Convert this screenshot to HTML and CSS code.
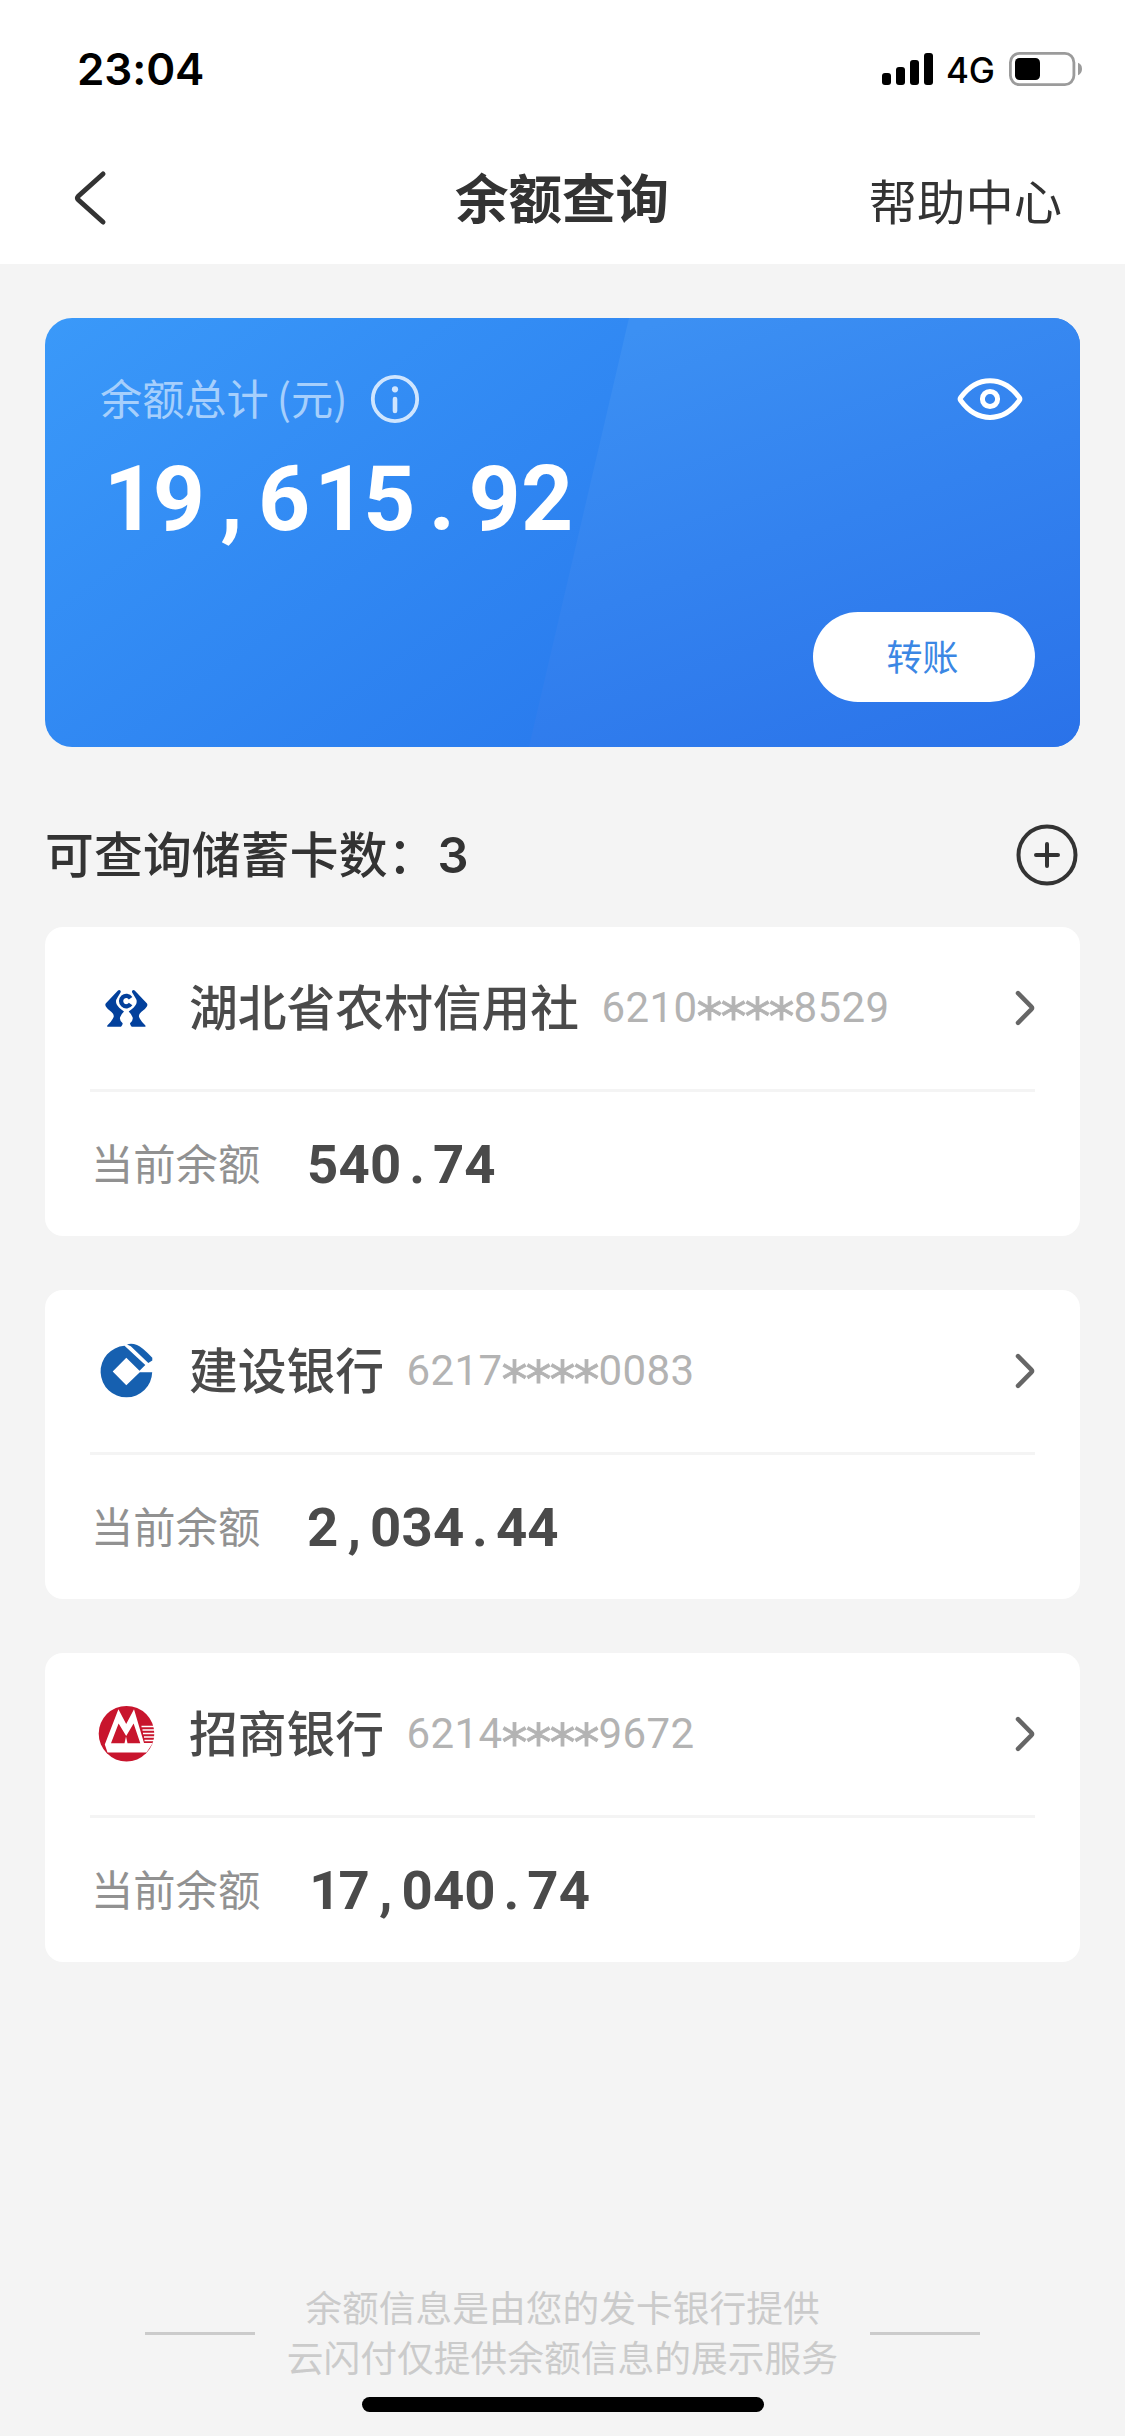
FILE: index.html
```html
<!DOCTYPE html>
<html lang="zh-CN">
<head>
<meta charset="utf-8">
<title>余额查询</title>
<link rel="stylesheet" href="styles.css">
</head>
<body>
<div class="screen">
  <header class="top">
    <div class="status">
      <span class="time">23:04</span>
      <div class="status-right">
        <svg class="signal" width="51" height="34" viewBox="0 0 51 34"><rect x="0" y="21" width="9" height="12" rx="3"/><rect x="14" y="15" width="9" height="18" rx="3"/><rect x="28" y="8" width="9" height="25" rx="3"/><rect x="42" y="1" width="9" height="32" rx="3"/></svg>
        <span class="network">4G</span>
        <svg class="battery" width="74" height="34" viewBox="0 0 74 34"><rect x="1.4" y="1.4" width="63.5" height="31.2" rx="9" fill="none" stroke="#9b9b9b" stroke-width="2.8"/><rect x="6" y="6" width="25" height="22" rx="4.5"/><path d="M69 10.8c2.600 1 4 3.200 4 6.200s-1.400 5.200-4 6.200z" fill="#9b9b9b"/></svg>
      </div>
    </div>
    <nav class="nav">
      <svg class="back" width="36" height="56" viewBox="0 0 36 56"><path d="M31 4 6.500 26q-2 2 0 4L31 52" fill="none" stroke="#333" stroke-width="5" stroke-linecap="round"/></svg>
      <h1 class="title">余额查询</h1>
      <a class="help">帮助中心</a>
    </nav>
  </header>

  <main class="main">
    <section class="summary">
      <div class="summary-head">
        <span class="label">余额总计<span class="unit">(元)</span></span>
        <svg class="info" width="50" height="50" viewBox="0 0 50 50"><circle cx="25" cy="25" r="22.200" fill="none" stroke="#cfe5fe" stroke-width="3.800"/><circle cx="25" cy="15.300" r="3.100" fill="#cfe5fe"/><path d="M25 25v12" stroke="#cfe5fe" stroke-width="4.600" stroke-linecap="round"/></svg>
        <svg class="eye" width="66" height="44" viewBox="0 0 66 44"><path d="M3.700 20.500C20-2 46-2 62.300 20.500q1.100 1.500 0 3C46 46 20 46 3.700 23.500q-1.100-1.500 0-3z" fill="none" stroke="#fff" stroke-width="5" stroke-linejoin="round"/><circle cx="33" cy="22" r="7.600" fill="none" stroke="#fff" stroke-width="5"/></svg>
      </div>
      <div class="total"><i class="one">1</i>9<i class="cell">,</i>6<i class="one">1</i>5<i class="cell">.</i>92</div>
      <button class="transfer">转账</button>
    </section>

    <div class="section-head">
      <h2 class="section-title">可查询储蓄卡数：<b class="count">3</b></h2>
      <svg width="62" height="62" viewBox="0 0 62 62"><g fill="none" stroke="#333" stroke-width="4"><circle cx="31" cy="31" r="28.500"/><path d="M20 31h22M31 20v22" stroke-linecap="round"/></g></svg>
    </div>

    <section class="card">
      <div class="bank">
        <svg class="logo" width="60" height="60" viewBox="0 0 60 60"><defs><path id="hand" d="M24.300 12.600q-1.100-1.200-2.300 0L9.700 25.500q-.9 1.500.3 3.300 1.500 2.700 5.500 5.200 3.800 3 1.300 6.800-2 3.700-5.300 6.500-.9 1.400.5 1.400H25q1.700-1.700 1.700-3.400-3.500-2.800-2.600-6 .8-3 3.900-5.900-5.800-3.700-7.500-7.400-1.300-3.500 1-6.600l3-5q.6-.9-.2-1.800z"/></defs><g fill="#02409c"><use href="#hand"/><use href="#hand" transform="translate(60.700 0) scale(-1 1)"/></g><path d="M34.600 20.200A5.200 5.200 0 1 0 34.600 26" fill="none" stroke="#02409c" stroke-width="4.300"/></svg>
        <span class="name">湖北省农村信用社</span>
        <span class="mask">6210<i>*</i><i>*</i><i>*</i><i>*</i>8529</span>
        <svg class="chevron" width="24" height="40" viewBox="0 0 24 40"><path d="M5 5.200 18.300 18.600q1.400 1.400 0 2.800L5 34.800" fill="none" stroke="#666" stroke-width="4.500" stroke-linecap="round"/></svg>
      </div>
      <div class="balance"><span class="balance-label">当前余额</span><span class="amount">540<i class="cell">.</i>74</span></div>
    </section>

    <section class="card">
      <div class="bank">
        <svg class="logo" width="60" height="60" viewBox="0 0 60 60"><path d="M28.500 4.800A25.800 25.800 0 1 0 56.200 31.300H43.800L30.300 44.300 16.700 30.500 30.300 16.800 43.500 29.800 49.300 24z" fill="#1660b0"/><path d="M31 3.600q4-1.700 10 .4 5 1.800 15.300 12.800v2.600L52.300 22 34.800 5.200z" fill="#1660b0"/></svg>
        <span class="name">建设银行</span>
        <span class="mask">6217<i>*</i><i>*</i><i>*</i><i>*</i>0083</span>
        <svg class="chevron" width="24" height="40" viewBox="0 0 24 40"><path d="M5 5.200 18.300 18.600q1.400 1.400 0 2.800L5 34.800" fill="none" stroke="#666" stroke-width="4.500" stroke-linecap="round"/></svg>
      </div>
      <div class="balance"><span class="balance-label">当前余额</span><span class="amount">2<i class="cell">,</i>034<i class="cell">.</i>44</span></div>
    </section>

    <section class="card">
      <div class="bank">
        <svg class="logo" width="60" height="60" viewBox="0 0 60 60"><circle cx="30.500" cy="29.700" r="27.800" fill="#c8152d"/><path d="M22.400 5.300 8.800 40.500 11.500 48.500H50.500L56.800 39H48L38 5.300 30.200 20z" fill="#fff"/><path d="M22.600 19.500 15 39.300H28.500L30 32.500 31.500 39.300H44.300L37.600 19.500 30.200 32z" fill="#c8152d"/><path d="M45.500 22.500H59M46.500 26H59M47 29.500H59M48 33H59M48.500 36.500H58" stroke="#fff" stroke-width="1.500"/></svg>
        <span class="name">招商银行</span>
        <span class="mask">6214<i>*</i><i>*</i><i>*</i><i>*</i>9672</span>
        <svg class="chevron" width="24" height="40" viewBox="0 0 24 40"><path d="M5 5.200 18.300 18.600q1.400 1.400 0 2.800L5 34.800" fill="none" stroke="#666" stroke-width="4.500" stroke-linecap="round"/></svg>
      </div>
      <div class="balance"><span class="balance-label">当前余额</span><span class="amount"><i class="one">1</i>7<i class="cell">,</i>040<i class="cell">.</i>74</span></div>
    </section>
  </main>

  <footer class="footer">
    <div class="notice"><span class="rule"></span><p>余额信息是由您的发卡银行提供<br>云闪付仅提供余额信息的展示服务</p><span class="rule"></span></div>
    <div class="home-bar"></div>
  </footer>
</div>
</body>
</html>
```
FILE: styles.css
```css
* { box-sizing: border-box; }
body { margin: 0; font-family: "Noto Sans CJK SC", sans-serif; color: #333; background: #f4f4f4; }
h1, h2, p { margin: 0; font-weight: 500; }
i { font-style: normal; }
svg { display: block; flex: none; }
.screen { width: 1125px; height: 2436px; display: flex; flex-direction: column; }

.top { height: 264px; background: #fff; }
.status { height: 132px; padding: 3px 42px 0 77px; display: flex; align-items: center; justify-content: space-between; font-family: Inter, sans-serif; color: #000; }
.time { font-size: 44px; font-weight: 600; line-height: 54px; letter-spacing: -0.1px; padding-top: 2px; }
.status-right { display: flex; align-items: center; padding-top: 3px; }
.network { width: 63px; margin: 0 0 0 13px; font-size: 35px; font-weight: 500; letter-spacing: -0.3px; line-height: 40px; padding-top: 1px; }
.nav { height: 132px; padding: 0 63px 0 72px; display: grid; grid-template-columns: 1fr auto 1fr; align-items: center; }
.title { font-size: 53.5px; font-weight: 700; line-height: 80px; padding: 0 10px 4px 0; }
.help { justify-self: end; font-size: 48.3px; line-height: 72px; padding-top: 2px; }

.main { padding: 54px 45px 0; }
.summary { position: relative; height: 429px; padding: 54px 45px 45px 55px; border-radius: 27px; overflow: hidden; background: linear-gradient(144deg, #3a99f9 0%, #2a7cee 66%); display: flex; flex-direction: column; isolation: isolate; }
.summary::before { content: ""; position: absolute; inset: 0 0 0 484px; z-index: -1; clip-path: polygon(100px 0, 100% 0, 100% 100%, 0 100%); background: linear-gradient(160deg, #3c90f3 8%, #3382ef 50%, #2a72e9 100%); }
.summary-head { display: flex; align-items: center; height: 54px; }
.label { width: 248px; font-size: 42.2px; line-height: 54px; padding-bottom: 4px; color: #a6cffc; white-space: nowrap; }
.unit { margin-left: 8px; }
.info { margin-left: 22px; }
.eye { margin-left: auto; margin-right: 12px; }
.total { margin-top: 21px; font: 700 91px/104px Roboto, sans-serif; letter-spacing: 0.4px; color: #fff; }
.cell { display: inline-block; width: 52.7px; text-align: center; }
.one { display: inline-block; transform: translateX(0.04em); }
.transfer { margin: auto 0 0 auto; width: 222px; height: 90px; border: 0; border-radius: 45px; background: #fff; color: #3b87e4; font: 400 36px/54px "Noto Sans CJK SC", sans-serif; padding: 0 3px 4px 0; }

.section-head { height: 180px; padding: 36px 2px 0 0; display: flex; align-items: center; justify-content: space-between; }
.section-title { font-size: 48.75px; line-height: 72px; letter-spacing: 0.2px; padding-bottom: 2px; }
.count { font-family: Inter, sans-serif; font-weight: 600; margin-left: 1px; }

.card { height: 309px; padding: 0 45px; margin-bottom: 54px; border-radius: 18px; background: #fff; }
.bank { height: 165px; border-bottom: 3px solid #f4f4f4; display: flex; align-items: center; }
.logo { margin-left: 6px; }
.name { margin-left: 33px; font-size: 48.75px; font-weight: 500; line-height: 72px; padding-bottom: 6px; color: #4a4a4a; }
.mask { display: flex; align-items: center; margin-left: 22.5px; height: 48px; font: 400 42px/48px Roboto, sans-serif; letter-spacing: 0.4px; color: #b3b3b3; }
.mask i { width: 24px; display: flex; justify-content: center; font: 400 52px/48px "DejaVu Sans", sans-serif; letter-spacing: 0; -webkit-text-stroke: 0.8px #b3b3b3; padding-top: 17px; }
.chevron { margin-left: auto; margin-right: -2px; }
.balance { height: 144px; display: flex; align-items: center; padding-left: 1px; }
.balance-label { width: 216px; font-size: 42.3px; line-height: 60px; padding-bottom: 4px; color: #919191; }
.amount { font: 700 54.5px/60px Roboto, sans-serif; letter-spacing: 0.2px; color: #4a4a4a; }
.amount .cell { width: 31.5px; }

.footer { margin-top: auto; height: 164px; display: flex; flex-direction: column; align-items: center; }
.notice { height: 125px; padding-bottom: 3px; display: flex; justify-content: center; align-items: center; gap: 32px; color: #cbcbcb; }
.notice p { font-size: 36.75px; line-height: 50px; font-weight: 400; text-align: center; padding-bottom: 4px; }
.rule { width: 110px; height: 3px; background: #cbcbcb; }
.home-bar { width: 402px; height: 15px; border-radius: 8px; background: #000; }
```
